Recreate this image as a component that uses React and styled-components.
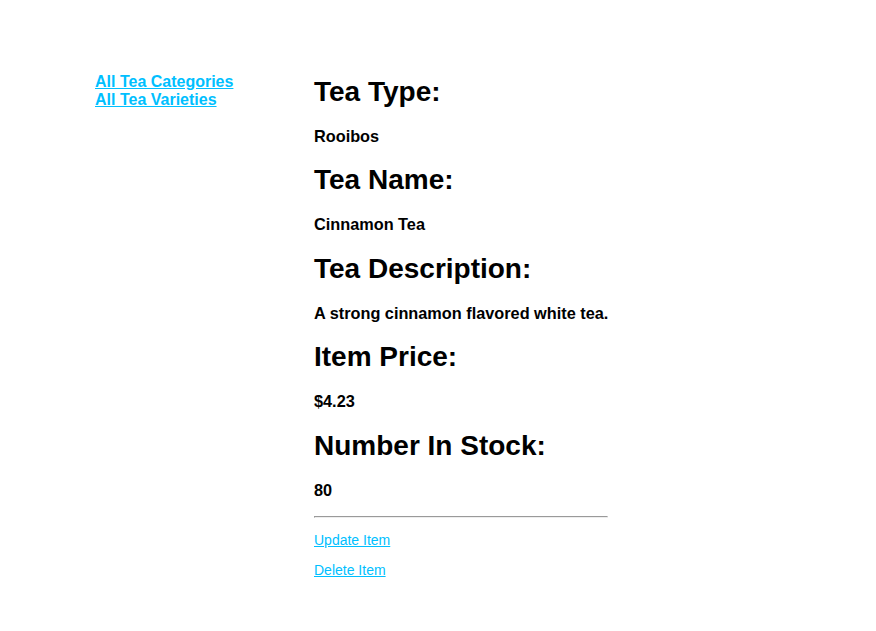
import React from 'react';
import styled, { createGlobalStyle } from 'styled-components';

const GlobalStyle = createGlobalStyle`
  body {
    margin: 0;
    font-family: "Liberation Sans", Arial, sans-serif;
    color: #000;
    background: #fff;
  }
`;

const Page = styled.div`
  display: flex;
  align-items: flex-start;
  padding: 57px 0 0 95px;
`;

const Sidebar = styled.ul`
  width: 219px;
  margin: 16px 0 0;
  padding: 0;
  list-style: none;
`;

const NavLink = styled.a`
  display: block;
  font-size: 16px;
  font-weight: bold;
  color: #00bfff;
  text-decoration: underline;
`;

const Main = styled.div`
  display: block;
`;

const Label = styled.h1`
  font-size: 28px;
  font-weight: bold;
  margin: 0.67em 0;
`;

const Value = styled.p`
  font-size: 16.3px;
  font-weight: bold;
  margin: 16px 0;
`;

const Rule = styled.hr`
  margin: 8px 0;
`;

const ActionRow = styled.p`
  font-size: 14px;
  margin: 14px 0;
`;

const Action = styled.a`
  color: #00bfff;
  text-decoration: underline;
`;

const details = [
  ['Tea Type:', 'Rooibos'],
  ['Tea Name:', 'Cinnamon Tea'],
  ['Tea Description:', 'A strong cinnamon flavored white tea.'],
  ['Item Price:', '$4.23'],
  ['Number In Stock:', '80'],
];

export default function App() {
  return (
    <>
      <GlobalStyle />
      <Page>
        <Sidebar>
          <li><NavLink href="#">All Tea Categories</NavLink></li>
          <li><NavLink href="#">All Tea Varieties</NavLink></li>
        </Sidebar>
        <Main>
          {details.map(([label, value]) => (
            <React.Fragment key={label}>
              <Label>{label}</Label>
              <Value>{value}</Value>
            </React.Fragment>
          ))}
          <Rule />
          <ActionRow><Action href="#">Update Item</Action></ActionRow>
          <ActionRow><Action href="#">Delete Item</Action></ActionRow>
        </Main>
      </Page>
    </>
  );
}
